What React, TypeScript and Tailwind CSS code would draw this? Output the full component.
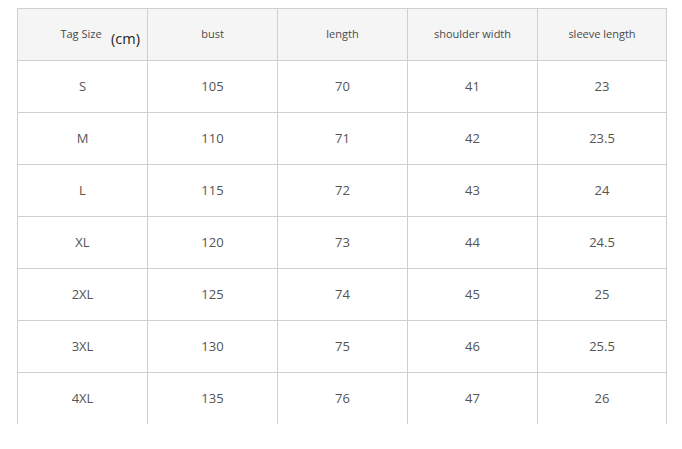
import React from "react";

const header = ["Tag Size", "bust", "length", "shoulder width", "sleeve length"];
const rows: string[][] = [
  ["S", "105", "70", "41", "23"],
  ["M", "110", "71", "42", "23.5"],
  ["L", "115", "72", "43", "24"],
  ["XL", "120", "73", "44", "24.5"],
  ["2XL", "125", "74", "45", "25"],
  ["3XL", "130", "75", "46", "25.5"],
  ["4XL", "135", "76", "47", "26"],
];

export default function App() {
  return (
    <div
      className="w-[682px] h-[449px] bg-white pl-[17px] pt-[8px]"
      style={{ fontFamily: '"Open Sans", "Noto Sans", sans-serif' }}
    >
      <div className="w-[650px] border-l border-t border-[#cfcfcf] grid grid-cols-[130px_130px_130px_130px_129px]">
        {header.map((h, i) => (
          <div
            key={h}
            className="relative h-[52px] border-r border-b border-[#cfcfcf] bg-[#f5f5f5] flex items-center justify-center text-[11px] text-[#4a4a4a]"
          >
            <span className={i === 0 ? "-ml-[3px]" : ""}>{h}</span>
            {i === 0 && (
              <span className="absolute left-[93px] top-[23px] text-[14.5px] text-[#222] leading-none">(cm)</span>
            )}
          </div>
        ))}
        {rows.map((r, ri) =>
          r.map((c, ci) => (
            <div
              key={ri + "-" + ci}
              className={
                "flex items-center justify-center border-r border-[#cfcfcf] text-[13px] text-[#555] " +
                (ri === rows.length - 1 ? "h-[51px]" : "h-[52px] border-b")
              }
            >
              {c}
            </div>
          ))
        )}
      </div>
    </div>
  );
}
